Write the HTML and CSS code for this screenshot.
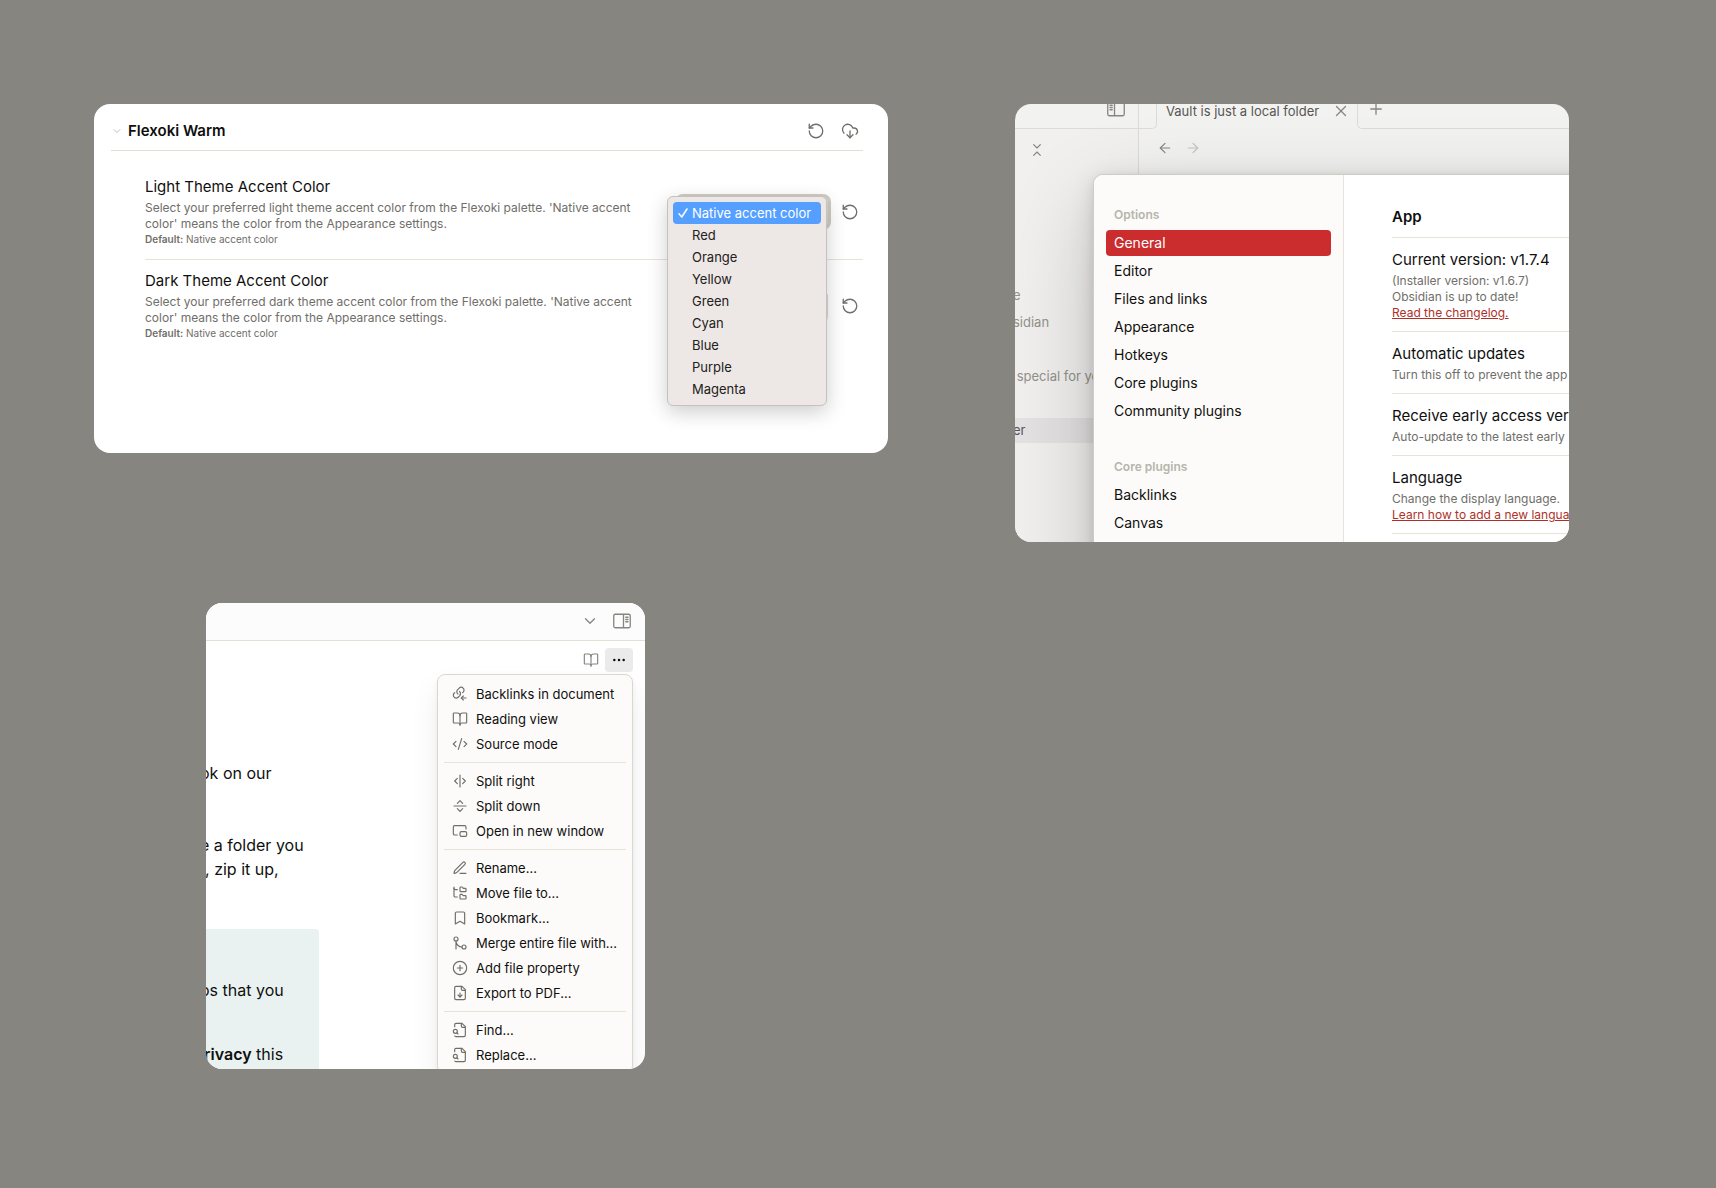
FILE: index.html
```html
<!DOCTYPE html>
<html lang="en">
<head>
<meta charset="utf-8">
<meta name="viewport" content="width=device-width, initial-scale=1">
<title>Flexoki Warm</title>
<link rel="stylesheet" href="styles.css">
</head>
<body>
<svg class="sprite" aria-hidden="true">
  <symbol id="rotate-ccw" viewBox="0 0 24 24"><path d="M3 12a9 9 0 1 0 9-9 9.75 9.75 0 0 0-6.74 2.74L3 8"/><path d="M3 3v5h5"/></symbol>
  <symbol id="cloud-down" viewBox="0 0 24 24"><path d="M4 14.899A7 7 0 1 1 15.71 8h1.79a4.5 4.5 0 0 1 2.5 8.242"/><path d="M12 12v9"/><path d="m8 17 4 4 4-4"/></symbol>
  <symbol id="chevron-down" viewBox="0 0 24 24"><path d="m6 9 6 6 6-6"/></symbol>
  <symbol id="check" viewBox="0 0 24 24"><path d="M4 13.500 9.500 20 20 4"/></symbol>
  <symbol id="sidebar-left" viewBox="0 0 24 24"><rect x="1" y="3" width="22" height="18" rx="2"/><path d="M10 4v16M4 7h3M4 10h3M4 13h3"/></symbol>
  <symbol id="sidebar-right" viewBox="0 0 24 24"><rect x="1" y="3" width="22" height="18" rx="2"/><path d="M14 4v16M17 7h3M17 10h3M17 13h3"/></symbol>
  <symbol id="fold" viewBox="0 0 24 24"><path d="m7 20 5-5 5 5"/><path d="m7 4 5 5 5-5"/></symbol>
  <symbol id="arrow-left" viewBox="0 0 24 24"><path d="m12 19-7-7 7-7"/><path d="M19 12H5"/></symbol>
  <symbol id="arrow-right" viewBox="0 0 24 24"><path d="m12 5 7 7-7 7"/><path d="M5 12h14"/></symbol>
  <symbol id="x" viewBox="0 0 24 24"><path d="M18 6 6 18"/><path d="m6 6 12 12"/></symbol>
  <symbol id="plus" viewBox="0 0 24 24"><path d="M5 12h14"/><path d="M12 5v14"/></symbol>
  <symbol id="book-open" viewBox="0 0 24 24"><path d="M12 7v14"/><path d="M3 18a1 1 0 0 1-1-1V4a1 1 0 0 1 1-1h5a4 4 0 0 1 4 4 4 4 0 0 1 4-4h5a1 1 0 0 1 1 1v13a1 1 0 0 1-1 1h-6a3 3 0 0 0-3 3 3 3 0 0 0-3-3z"/></symbol>
  <symbol id="more" viewBox="0 0 24 24"><circle cx="5" cy="12" r="1"/><circle cx="12" cy="12" r="1"/><circle cx="19" cy="12" r="1"/></symbol>
  <symbol id="links-in" viewBox="0 0 24 24"><path d="M8.705 12a5.020 5.020 0 0 1-.46-6.313l2.551-2.512a4.300 4.300 0 0 1 5.959.051 4.100 4.100 0 0 1 .052 5.869L15.901 10"/><path d="M11.295 8a5.020 5.020 0 0 1 .46 6.313l-2.551 2.512a4.300 4.300 0 0 1-5.959-.051 4.100 4.100 0 0 1-.052-5.869L4.099 10"/><path d="m17 21-3-3 3-3"/><path d="M21 18h-7"/></symbol>
  <symbol id="code" viewBox="0 0 24 24"><path d="m18 16 4-4-4-4"/><path d="m6 8-4 4 4 4"/><path d="m14.500 4-5 16"/></symbol>
  <symbol id="split-v" viewBox="0 0 24 24"><path d="M12 3v18"/><path d="m8 8-4 4 4 4"/><path d="m16 16 4-4-4-4"/></symbol>
  <symbol id="split-h" viewBox="0 0 24 24"><path d="M3 12h18"/><path d="m8 8 4-4 4 4"/><path d="m16 16-4 4-4-4"/></symbol>
  <symbol id="new-window" viewBox="0 0 24 24"><path d="M21 9V6a2 2 0 0 0-2-2H4a2 2 0 0 0-2 2v10c0 1.100.9 2 2 2h4"/><rect width="10" height="7" x="12" y="13" rx="2"/></symbol>
  <symbol id="pen" viewBox="0 0 24 24"><path d="M12 20h9"/><path d="M16.376 3.622a1 1 0 0 1 3.002 3.002L7.368 18.635a2 2 0 0 1-.855.506l-2.872.838a.5.5 0 0 1-.62-.62l.838-2.872a2 2 0 0 1 .506-.854z"/></symbol>
  <symbol id="folder-tree" viewBox="0 0 24 24"><path d="M20 10a1 1 0 0 0 1-1V6a1 1 0 0 0-1-1h-2.500a1 1 0 0 1-.8-.4l-.9-1.200A1 1 0 0 0 15 3h-2a1 1 0 0 0-1 1v5a1 1 0 0 0 1 1Z"/><path d="M20 21a1 1 0 0 0 1-1v-3a1 1 0 0 0-1-1h-2.900a1 1 0 0 1-.88-.55l-.42-.85a1 1 0 0 0-.92-.6H13a1 1 0 0 0-1 1v5a1 1 0 0 0 1 1Z"/><path d="M3 5a2 2 0 0 0 2 2h3"/><path d="M3 3v13a2 2 0 0 0 2 2h3"/></symbol>
  <symbol id="bookmark" viewBox="0 0 24 24"><path d="m19 21-7-4-7 4V5a2 2 0 0 1 2-2h10a2 2 0 0 1 2 2v16z"/></symbol>
  <symbol id="merge" viewBox="0 0 24 24"><circle cx="18" cy="18" r="3"/><circle cx="6" cy="6" r="3"/><path d="M6 21V9a9 9 0 0 0 9 9"/></symbol>
  <symbol id="plus-circle" viewBox="0 0 24 24"><circle cx="12" cy="12" r="10"/><path d="M8 12h8M12 8v8"/></symbol>
  <symbol id="file-down" viewBox="0 0 24 24"><path d="M15 2H6a2 2 0 0 0-2 2v16a2 2 0 0 0 2 2h12a2 2 0 0 0 2-2V7Z"/><path d="M14 2v4a2 2 0 0 0 2 2h4"/><path d="M12 18v-6"/><path d="m9 15 3 3 3-3"/></symbol>
  <symbol id="file-search" viewBox="0 0 24 24"><path d="M14 2v4a2 2 0 0 0 2 2h4"/><path d="M4.268 21a2 2 0 0 0 1.727 1H18a2 2 0 0 0 2-2V7l-5-5H6a2 2 0 0 0-2 2v3"/><path d="m9 18-1.500-1.500"/><circle cx="5" cy="14" r="3"/></symbol>
</svg>

<main class="board">
  <div class="row row-top">
    <section class="card style-settings">
      <header class="style-header">
        <svg class="icon icon-tiny"><use href="#chevron-down"/></svg>
        <h1 class="style-title">Flexoki Warm</h1>
        <button class="icon-button" aria-label="Restore all defaults"><svg class="icon"><use href="#rotate-ccw"/></svg></button>
        <button class="icon-button" aria-label="Export settings"><svg class="icon"><use href="#cloud-down"/></svg></button>
      </header>
      <div class="style-body">
        <div class="setting">
          <div class="setting-info">
            <label class="setting-name" for="light-accent">Light Theme Accent Color</label>
            <p class="setting-desc">Select your preferred light theme accent color from the Flexoki palette. 'Native accent color' means the color from the Appearance settings.</p>
            <p class="setting-default"><strong>Default:</strong> Native accent color</p>
          </div>
          <div class="picker">
            <select id="light-accent" class="dropdown dropdown-open"><option>Native accent color</option></select>
            <ul class="popup" role="listbox" aria-label="Accent colors">
              <li class="popup-option selected" role="option" aria-selected="true"><svg class="icon icon-check"><use href="#check"/></svg>Native accent color</li>
              <li class="popup-option" role="option">Red</li>
              <li class="popup-option" role="option">Orange</li>
              <li class="popup-option" role="option">Yellow</li>
              <li class="popup-option" role="option">Green</li>
              <li class="popup-option" role="option">Cyan</li>
              <li class="popup-option" role="option">Blue</li>
              <li class="popup-option" role="option">Purple</li>
              <li class="popup-option" role="option">Magenta</li>
            </ul>
          </div>
          <button class="icon-button" aria-label="Restore default"><svg class="icon"><use href="#rotate-ccw"/></svg></button>
        </div>
        <div class="setting">
          <div class="setting-info">
            <label class="setting-name" for="dark-accent">Dark Theme Accent Color</label>
            <p class="setting-desc">Select your preferred dark theme accent color from the Flexoki palette. 'Native accent color' means the color from the Appearance settings.</p>
            <p class="setting-default"><strong>Default:</strong> Native accent color</p>
          </div>
          <div class="picker">
            <select id="dark-accent" class="dropdown"><option>Native accent color</option></select>
          </div>
          <button class="icon-button" aria-label="Restore default"><svg class="icon"><use href="#rotate-ccw"/></svg></button>
        </div>
      </div>
    </section>

    <section class="card vault">
      <div class="app">
        <div class="tabs">
          <div class="tabs-left">
            <div class="tabs-sidebar"><button class="bare" aria-label="Toggle sidebar"><svg class="icon"><use href="#sidebar-left"/></svg></button></div>
          </div>
          <div class="tab">
            <span class="tab-title">Vault is just a local folder</span>
            <button class="bare" aria-label="Close tab"><svg class="icon"><use href="#x"/></svg></button>
          </div>
          <div class="tabs-right"><button class="bare" aria-label="New tab"><svg class="icon"><use href="#plus"/></svg></button></div>
        </div>
        <div class="workspace">
          <div class="explorer">
            <button class="bare fold" aria-label="Collapse all"><svg class="icon icon-small"><use href="#fold"/></svg></button>
            <ul class="files">
              <li class="file">e</li>
              <li class="file">sidian</li>
              <li class="file"></li>
              <li class="file">&nbsp;special for you</li>
              <li class="file"></li>
              <li class="file active">er</li>
            </ul>
          </div>
          <div class="pane">
            <button class="bare" aria-label="Back"><svg class="icon icon-small"><use href="#arrow-left"/></svg></button>
            <button class="bare" aria-label="Forward" disabled><svg class="icon icon-small"><use href="#arrow-right"/></svg></button>
          </div>
        </div>
      </div>
      <div class="modal" role="dialog" aria-label="Settings">
        <nav class="nav">
          <h2 class="nav-heading">Options</h2>
          <a class="nav-item current" href="#general">General</a>
          <a class="nav-item" href="#editor">Editor</a>
          <a class="nav-item" href="#files">Files and links</a>
          <a class="nav-item" href="#appearance">Appearance</a>
          <a class="nav-item" href="#hotkeys">Hotkeys</a>
          <a class="nav-item" href="#core">Core plugins</a>
          <a class="nav-item" href="#community">Community plugins</a>
          <h2 class="nav-heading nav-heading-next">Core plugins</h2>
          <a class="nav-item" href="#backlinks">Backlinks</a>
          <a class="nav-item" href="#canvas">Canvas</a>
        </nav>
        <div class="general">
          <h2 class="general-title">App</h2>
          <div class="general-item">
            <h3 class="setting-name">Current version: v1.7.4</h3>
            <p class="setting-desc">(Installer version: v1.6.7)</p>
            <p class="setting-desc">Obsidian is up to date!</p>
            <p class="setting-desc"><a class="link" href="#changelog">Read the changelog.</a></p>
          </div>
          <div class="general-item">
            <h3 class="setting-name">Automatic updates</h3>
            <p class="setting-desc">Turn this off to prevent the app</p>
          </div>
          <div class="general-item">
            <h3 class="setting-name">Receive early access versions</h3>
            <p class="setting-desc">Auto-update to the latest early</p>
          </div>
          <div class="general-item">
            <h3 class="setting-name">Language</h3>
            <p class="setting-desc">Change the display language.</p>
            <p class="setting-desc"><a class="link" href="#translate">Learn how to add a new language</a></p>
          </div>
          <div class="general-item"></div>
        </div>
      </div>
    </section>
  </div>

  <div class="row row-bottom">
    <section class="card note">
      <header class="note-tabs">
        <button class="bare" aria-label="Tab list"><svg class="icon"><use href="#chevron-down"/></svg></button>
        <button class="bare" aria-label="Toggle right sidebar"><svg class="icon"><use href="#sidebar-right"/></svg></button>
      </header>
      <div class="note-actions">
        <button class="bare" aria-label="Reading view"><svg class="icon icon-small"><use href="#book-open"/></svg></button>
        <button class="more" aria-label="More options" aria-expanded="true"><svg class="icon icon-small"><use href="#more"/></svg></button>
        <div class="menu" role="menu">
          <button class="menu-item" role="menuitem"><svg class="icon icon-small"><use href="#links-in"/></svg>Backlinks in document</button>
          <button class="menu-item" role="menuitem"><svg class="icon icon-small"><use href="#book-open"/></svg>Reading view</button>
          <button class="menu-item" role="menuitem"><svg class="icon icon-small"><use href="#code"/></svg>Source mode</button>
          <hr class="menu-separator">
          <button class="menu-item" role="menuitem"><svg class="icon icon-small"><use href="#split-v"/></svg>Split right</button>
          <button class="menu-item" role="menuitem"><svg class="icon icon-small"><use href="#split-h"/></svg>Split down</button>
          <button class="menu-item" role="menuitem"><svg class="icon icon-small"><use href="#new-window"/></svg>Open in new window</button>
          <hr class="menu-separator">
          <button class="menu-item" role="menuitem"><svg class="icon icon-small"><use href="#pen"/></svg>Rename...</button>
          <button class="menu-item" role="menuitem"><svg class="icon icon-small"><use href="#folder-tree"/></svg>Move file to...</button>
          <button class="menu-item" role="menuitem"><svg class="icon icon-small"><use href="#bookmark"/></svg>Bookmark...</button>
          <button class="menu-item" role="menuitem"><svg class="icon icon-small"><use href="#merge"/></svg>Merge entire file with...</button>
          <button class="menu-item" role="menuitem"><svg class="icon icon-small"><use href="#plus-circle"/></svg>Add file property</button>
          <button class="menu-item" role="menuitem"><svg class="icon icon-small"><use href="#file-down"/></svg>Export to PDF...</button>
          <hr class="menu-separator">
          <button class="menu-item" role="menuitem"><svg class="icon icon-small"><use href="#file-search"/></svg>Find...</button>
          <button class="menu-item" role="menuitem"><svg class="icon icon-small"><use href="#file-search"/></svg>Replace...</button>
        </div>
      </div>
      <article class="note-body">
        <p class="para">ok on our</p>
        <p class="para">e a folder you<br>r, zip it up,</p>
        <div class="callout">
          <p class="para">os that you</p>
          <p class="para"><strong>rivacy</strong> this</p>
        </div>
      </article>
    </section>
  </div>
</main>
</body>
</html>
```

FILE: styles.css
```css
* {
  box-sizing: border-box;
}

body {
  margin: 0;
  background: #878580;
  color: #100f0f;
  font: 13px/16px Inter, "Liberation Sans", sans-serif;
}

h1, h2, h3, p, ul {
  margin: 0;
  padding: 0;
  font-weight: 400;
}

ul {
  list-style: none;
}

strong {
  font-weight: 600;
}

button {
  border: 0;
  padding: 0;
  background: none;
  color: inherit;
  font: inherit;
}

.sprite {
  display: none;
}

.icon {
  display: block;
  flex: none;
  width: 18px;
  height: 18px;
  fill: none;
  stroke: currentColor;
  stroke-width: 1.75;
  stroke-linecap: round;
  stroke-linejoin: round;
}

.icon-small {
  width: 16px;
  height: 16px;
}

.icon-tiny {
  width: 12px;
  height: 12px;
  color: #b7b5ac;
}

.icon-check {
  width: 12px;
  height: 12px;
  stroke-width: 3;
}

/* Board */

.board {
  padding: 104px 147px 104px 94px;
}

.row {
  display: grid;
  align-items: start;
}

.row-top {
  grid-template-columns: 794fr 554fr;
  column-gap: 127px;
}

.row-bottom {
  grid-template-columns: 439fr 924fr;
  margin-top: 61px;
  padding-left: 112px;
}

.card {
  min-width: 0;
  overflow: hidden;
  border-radius: 16px;
  background: #fff;
}

/* Shared setting text */

.setting-name {
  display: block;
  margin-bottom: 3px;
  font-size: 15px;
  line-height: 20px;
}

.setting-desc {
  color: #6f6e69;
  font-size: 12px;
  line-height: 16px;
}

/* Style settings */

.style-settings {
  padding: 0 25px 100px 17px;
}

.style-header {
  display: flex;
  align-items: center;
  gap: 8px;
  padding: 15px 0 7px;
  border-bottom: 1px solid #e2e0d5;
}

.style-header .icon-tiny {
  margin: 0 -3px 0 0;
}

.style-title {
  flex: 1;
  font-size: 15px;
  font-weight: 600;
  line-height: 24px;
}

.icon-button {
  display: grid;
  place-items: center;
  width: 26px;
  height: 24px;
  color: #6f6e69;
}

.style-body {
  padding: 15px 0 0 34px;
}

.setting {
  display: flex;
  align-items: center;
  padding: 11px 0 12px;
}

.setting + .setting {
  border-top: 1px solid #e6e4d9;
}

.setting-info {
  flex: 1;
  padding-right: 18px;
}

.setting-default {
  color: #6f6e69;
  font-size: 10px;
  line-height: 15px;
}

.picker {
  position: relative;
  margin-right: 9px;
}

.dropdown {
  display: block;
  width: 150px;
  height: 30px;
  padding: 0 8px;
  border: 1px solid #dad8ce;
  border-radius: 5px;
  background: #fff;
  box-shadow: 0 1px 1px rgba(0, 0, 0, 0.1);
  color: inherit;
  font: inherit;
  appearance: none;
}

.dropdown-open {
  box-shadow: 0 0 0 3px #cecdc3;
}

.popup {
  position: absolute;
  z-index: 1;
  top: -1px;
  right: 1px;
  width: 160px;
  padding: 5px;
  border: 1px solid #c4c1be;
  border-radius: 6px;
  background: #ede8e6;
  box-shadow: 0 6px 20px rgba(0, 0, 0, 0.2);
  color: #232120;
}

.popup-option {
  display: flex;
  align-items: center;
  padding-left: 19px;
  border-radius: 4px;
  line-height: 22px;
}

.popup-option.selected {
  gap: 3px;
  padding-left: 4px;
  background: #549fff;
  color: #fff;
}

/* Vault window with the settings dialog over it */

.vault {
  display: grid;
}

.app,
.modal {
  grid-area: 1 / 1;
  min-width: 0;
}

.app {
  display: flex;
  flex-direction: column;
  background: #f2f2f1;
  color: #575653;
}

.bare {
  display: block;
  color: #878580;
}

.bare:disabled {
  color: #c4c3c0;
}

.tabs {
  display: flex;
  height: 25px;
}

.tabs-left {
  width: 142px;
  border: solid #dddbd3;
  border-width: 0 1px 1px 0;
  border-bottom-right-radius: 5px;
}

.tabs-sidebar {
  display: flex;
  align-items: flex-start;
  justify-content: flex-end;
  width: 124px;
  height: 25px;
  padding-right: 13px;
  border-right: 1px solid #dddbd3;
}

.tabs-sidebar .bare,
.tabs-right .bare {
  margin-top: -4px;
}

.tab {
  display: flex;
  align-items: flex-start;
  justify-content: space-between;
  width: 200px;
  padding: 0 7px 0 9px;
  line-height: 14px;
  white-space: nowrap;
}

.tab .bare {
  margin-top: -2px;
}

.tabs-right {
  flex: 1;
  padding-left: 9px;
  border: solid #dddbd3;
  border-width: 0 0 1px 1px;
  border-bottom-left-radius: 5px;
}

.workspace {
  display: flex;
  flex: 1;
}

.explorer {
  width: 124px;
  padding-top: 13px;
  border-right: 1px solid #dddbd3;
  background: #f1f0ee;
}

.fold {
  margin: 0 0 125px 14px;
}

.files {
  display: grid;
  gap: 2px;
}

.file {
  height: 25px;
  margin-left: -2px;
  color: #93918c;
  line-height: 25px;
  white-space: nowrap;
}

.file.active {
  background: #e4e2e3;
  color: #575653;
}

.pane {
  display: flex;
  align-items: flex-start;
  gap: 12px;
  padding: 11px 18px;
}

.modal {
  display: grid;
  grid-template-columns: 250px 1fr;
  margin: 70px -120px -120px 78px;
  overflow: hidden;
  border: 1px solid #cecdc3;
  border-radius: 10px;
  background: #fff;
  box-shadow: 0 2px 8px rgba(0, 0, 0, 0.07), 0 6px 25px rgba(0, 0, 0, 0.12), 0 30px 90px rgba(0, 0, 0, 0.2);
}

.nav {
  padding: 31px 12px 123px;
  border-right: 1px solid #e6e4d9;
  background: #fcfbf9;
}

.nav-heading {
  margin-bottom: 7px;
  padding: 0 8px;
  color: #b7b5ac;
  font-size: 12px;
  font-weight: 600;
  line-height: 17px;
}

.nav-heading-next {
  margin-top: 34px;
}

.nav-item {
  display: block;
  margin-bottom: 2px;
  padding: 0 8px;
  border-radius: 4px;
  color: inherit;
  font-size: 14px;
  line-height: 26px;
  text-decoration: none;
}

.nav-item.current {
  background: #cb2c2e;
  color: #fff;
}

.general {
  padding: 30px 48px 0;
  white-space: nowrap;
}

.general-title {
  padding-bottom: 8px;
  font-size: 15px;
  font-weight: 600;
  line-height: 24px;
}

.general-item {
  padding: 12px 0 10px;
  border-top: 1px solid #e6e4d9;
}

.link {
  color: #af3029;
}

/* Note with its options menu */

.note-tabs {
  display: flex;
  justify-content: flex-end;
  gap: 14px;
  padding: 9px 14px 10px;
  border-bottom: 1px solid #e2e0d5;
  background: #fcfcfc;
}

.note-actions {
  display: flex;
  position: relative;
  align-items: center;
  justify-content: flex-end;
  gap: 6px;
  padding: 7px 12px 0;
}

.more {
  display: grid;
  place-items: center;
  width: 28px;
  height: 24px;
  border-radius: 4px;
  background: #ebebeb;
}

.menu {
  position: absolute;
  z-index: 1;
  top: 33px;
  right: 12px;
  width: 196px;
  padding: 6px;
  border: 1px solid #dad8ce;
  border-radius: 8px;
  background: #fcfbf9;
  box-shadow: 0 1px 2px rgba(0, 0, 0, 0.03), 0 3px 7px rgba(0, 0, 0, 0.04), 0 15px 30px rgba(0, 0, 0, 0.07);
}

.menu-item {
  display: flex;
  align-items: center;
  gap: 8px;
  width: 100%;
  height: 25px;
  padding: 0 8px;
  white-space: nowrap;
}

.menu-item .icon {
  color: #6f6e69;
}

.menu-separator {
  height: 1px;
  margin: 6px 0 5px;
  border: 0;
  background: #e6e4d9;
}

.note-body {
  padding-top: 89px;
  font-size: 16px;
  line-height: 24px;
}

.para {
  margin-bottom: 48px;
  margin-left: -6px;
}

.callout {
  width: 113px;
  padding: 49px 0 3px;
  border-radius: 0 4px 0 0;
  background: #e9f2f0;
}

.callout .para {
  margin-bottom: 40px;
}

.callout .para:last-child {
  margin: 0 0 0 -2px;
}
```
